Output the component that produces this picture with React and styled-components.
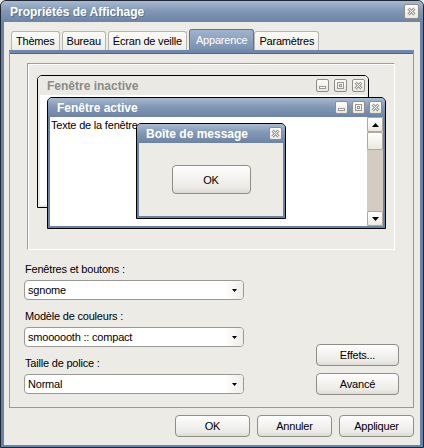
import styled, { createGlobalStyle } from 'styled-components';

const GlobalStyle = createGlobalStyle`
    body {
        margin: 0;
        background: #ecebe6;
        font-family: 'Liberation Sans', Arial, sans-serif;
        font-size: 11px;
        letter-spacing: -0.2px;
    }
`;

const Window = styled.div`
    width: 424px;
    height: 448px;
    box-sizing: border-box;
    border: 1px solid #1d2633;
    border-radius: 6px 6px 0 0;
    background: #6a82a3;
    display: flex;
    flex-direction: column;
    overflow: hidden;
`;

const TitleBar = styled.div`
    height: 21px;
    flex: none;
    display: flex;
    align-items: center;
    justify-content: space-between;
    padding: 0 4px 0 9px;
    background: linear-gradient(#a9bad0 0%, #8298b6 45%, #6c84a5 100%);
`;

const TitleText = styled.span`
    color: #fff;
    font-weight: bold;
    font-size: 12px;
    letter-spacing: 0;
    text-shadow: 1px 1px 0 rgba(40, 55, 80, 0.35);
`;

const Body = styled.div`
    flex: 1;
    margin: 0 3px 2px;
    background: #ecebe6;
    padding: 7px 6px 8px 5px;
    display: flex;
    flex-direction: column;
`;

const TabRow = styled.div`
    height: 21px;
    display: flex;
    align-items: flex-end;
    padding-left: 2px;
`;

const Tab = styled.div`
    height: ${(p) => (p.$selected ? 21 : 19)}px;
    box-sizing: border-box;
    padding: 0 ${(p) => (p.$selected ? 6 : 4)}px;
    margin-right: ${(p) => (p.$selected ? 0 : 2)}px;
    display: flex;
    align-items: center;
    border: 1px solid ${(p) => (p.$selected ? '#5d7494' : '#b7b5ae')};
    border-bottom: none;
    border-radius: 3px 3px 0 0;
    background: ${(p) =>
        p.$selected
            ? 'linear-gradient(#9fb3cc, #7890b0)'
            : 'linear-gradient(#fbfbf9, #eeede8)'};
    color: ${(p) => (p.$selected ? '#fff' : '#000')};
    white-space: nowrap;
`;

const Panel = styled.div`
    height: 358px;
    box-sizing: border-box;
    border: 1px solid #919b9c;
    border-top: 3px solid #6f88a9;
    box-shadow: inset 0 1px 0 #4f6586;
    padding: 10px 14px 0 14px;
    display: flex;
    flex-direction: column;
`;

const Preview = styled.div`
    position: relative;
    width: 368px;
    height: 187px;
    box-sizing: border-box;
    margin-left: 3px;
    border: 1px solid;
    border-color: #9d9c97 #fff #fff #9d9c97;
    box-shadow: inset 1px 1px 0 #fff;
    background: #ecebe6;
`;

const MiniWindow = styled.div`
    position: absolute;
    left: ${(p) => p.$x}px;
    top: ${(p) => p.$y}px;
    width: ${(p) => p.$w}px;
    height: ${(p) => p.$h}px;
    box-sizing: border-box;
    border: 1px solid #000;
    border-radius: 5px 5px 0 0;
    background: ${(p) => (p.$active ? '#6a82a3' : '#ebe9e3')};
    padding: 0 2px 2px;
    display: flex;
    flex-direction: column;
    overflow: hidden;
`;

const MiniTitle = styled.div`
    height: 19px;
    flex: none;
    display: flex;
    align-items: center;
    justify-content: space-between;
    padding: 0 3px 0 9px;
    margin: 0 -2px;
    background: ${(p) =>
        p.$active ? 'linear-gradient(#a9bad0 0%, #8298b6 45%, #6c84a5 100%)' : '#ebe9e3'};
    color: ${(p) => (p.$active ? '#fff' : '#8c8b87')};
    font-weight: bold;
    font-size: 12px;
    letter-spacing: 0;
`;

const CaptionGroup = styled.div`
    display: flex;
    gap: ${(p) => p.$gap}px;
`;

const CaptionBtn = styled.div`
    width: ${(p) => p.$size}px;
    height: ${(p) => p.$size}px;
    box-sizing: border-box;
    border: 1px solid #8f8e89;
    border-radius: 2px;
    background: linear-gradient(#fdfdfb, #e9e7e0);
    display: flex;
    align-items: center;
    justify-content: center;
`;

const Client = styled.div`
    flex: 1;
    background: #fff;
    display: flex;
`;

const ClientText = styled.div`
    flex: 1;
    padding: 2px 1px;
    color: #000;
`;

const ScrollBar = styled.div`
    width: 16px;
    display: flex;
    flex-direction: column;
    background: #d4ccc1;
`;

const ScrollPart = styled.div`
    height: ${(p) => p.$h}px;
    box-sizing: border-box;
    border: 1px solid #b1a99c;
    border-radius: 2px;
    background: linear-gradient(#fff, #ebe8e1);
    display: flex;
    align-items: center;
    justify-content: center;
`;

const Track = styled.div`
    flex: 1;
`;

const MsgBody = styled.div`
    flex: 1;
    background: #ecebe6;
    display: flex;
    align-items: center;
    justify-content: center;
`;

const Button = styled.div`
    width: ${(p) => p.$w}px;
    height: ${(p) => p.$h || 22}px;
    box-sizing: border-box;
    border: 1px solid #8e8d88;
    border-radius: 4px;
    background: linear-gradient(#fefefe, #ebeae5 80%, #dcdad3);
    display: flex;
    align-items: center;
    justify-content: center;
    color: #000;
`;

const Lower = styled.div`
    display: flex;
    justify-content: space-between;
    align-items: flex-end;
    margin-top: 13px;
`;

const Column = styled.div`
    width: 220px;
    display: flex;
    flex-direction: column;
`;

const Label = styled.div`
    line-height: 13px;
    margin: ${(p) => (p.$first ? 0 : 10)}px 0 4px 1px;
`;

const Select = styled.div`
    height: 20px;
    box-sizing: border-box;
    border: 1px solid #9a9995;
    border-radius: 4px;
    background: #fff;
    display: flex;
    align-items: center;
    overflow: hidden;
`;

const SelectValue = styled.div`
    flex: 1;
    padding-left: 3px;
`;

const SelectArrow = styled.div`
    width: 18px;
    align-self: stretch;
    background: linear-gradient(to right, #fff, #eeede9);
    display: flex;
    align-items: center;
    justify-content: center;
`;

const SideButtons = styled.div`
    display: flex;
    flex-direction: column;
    gap: 7px;
    margin-bottom: -1px;
`;

const Footer = styled.div`
    margin-top: 7px;
    display: flex;
    justify-content: flex-end;
    gap: 7px;
`;

const Glyph = ({ kind }) => {
    if (kind === 'min')
        return (
            <svg width="9" height="9" viewBox="0 0 9 9">
                <rect x="1.5" y="5.5" width="6" height="2" fill="#fff" stroke="#9a9994" />
            </svg>
        );
    if (kind === 'max')
        return (
            <svg width="9" height="9" viewBox="0 0 9 9">
                <rect x="1.5" y="1.5" width="6" height="6" fill="none" stroke="#9a9994" />
                <rect x="3.5" y="3.5" width="2" height="2" fill="none" stroke="#9a9994" />
            </svg>
        );
    return (
        <svg width="9" height="9" viewBox="0 0 9 9">
            <path d="M1.5 1.5 L7.5 7.5 M7.5 1.5 L1.5 7.5" stroke="#9a9994" strokeWidth="3" />
            <path d="M1.5 1.5 L7.5 7.5 M7.5 1.5 L1.5 7.5" stroke="#fff" strokeWidth="1" />
        </svg>
    );
};

const Caption = ({ kinds, size = 13, gap = 4 }) => (
    <CaptionGroup $gap={gap}>
        {kinds.map((k) => (
            <CaptionBtn key={k} $size={size}>
                <Glyph kind={k} />
            </CaptionBtn>
        ))}
    </CaptionGroup>
);

const Triangle = ({ up, w = 7, h = 4 }) => (
    <svg width={w} height={h} viewBox={`0 0 ${w} ${h}`}>
        <polygon points={up ? `0,${h} ${w},${h} ${w / 2},0` : `0,0 ${w},0 ${w / 2},${h}`} fill="#000" />
    </svg>
);

const tabs = ['Thèmes', 'Bureau', 'Écran de veille', 'Apparence', 'Paramètres'];

const fields = [
    { label: 'Fenêtres et boutons :', value: 'sgnome' },
    { label: 'Modèle de couleurs :', value: 'smoooooth :: compact' },
    { label: 'Taille de police :', value: 'Normal' },
];

const App = () => {
    return (
        <>
            <GlobalStyle />
            <Window>
                <TitleBar>
                    <TitleText>Propriétés de Affichage</TitleText>
                    <Caption kinds={['close']} size={15} />
                </TitleBar>
                <Body>
                    <TabRow>
                        {tabs.map((t) => (
                            <Tab key={t} $selected={t === 'Apparence'}>
                                {t}
                            </Tab>
                        ))}
                    </TabRow>
                    <Panel>
                        <Preview>
                            <MiniWindow $x={9} $y={11} $w={332} $h={133}>
                                <MiniTitle>
                                    Fenêtre inactive
                                    <Caption kinds={['min', 'max', 'close']} gap={5} />
                                </MiniTitle>
                                <Client />
                            </MiniWindow>
                            <MiniWindow $active $x={19} $y={33} $w={339} $h={132}>
                                <MiniTitle $active>
                                    Fenêtre active
                                    <Caption kinds={['min', 'max', 'close']} gap={4} />
                                </MiniTitle>
                                <Client>
                                    <ClientText>Texte de la fenêtre</ClientText>
                                    <ScrollBar>
                                        <ScrollPart $h={15}>
                                            <Triangle up />
                                        </ScrollPart>
                                        <ScrollPart $h={18} />
                                        <Track />
                                        <ScrollPart $h={15}>
                                            <Triangle />
                                        </ScrollPart>
                                    </ScrollBar>
                                </Client>
                            </MiniWindow>
                            <MiniWindow $active $x={108} $y={59} $w={150} $h={96}>
                                <MiniTitle $active>
                                    Boîte de message
                                    <Caption kinds={['close']} />
                                </MiniTitle>
                                <MsgBody>
                                    <Button $w={79} $h={29}>OK</Button>
                                </MsgBody>
                            </MiniWindow>
                        </Preview>
                        <Lower>
                            <Column>
                                {fields.map((f, i) => (
                                    <div key={f.label}>
                                        <Label $first={i === 0}>{f.label}</Label>
                                        <Select>
                                            <SelectValue>{f.value}</SelectValue>
                                            <SelectArrow>
                                                <Triangle w={5} h={3} />
                                            </SelectArrow>
                                        </Select>
                                    </div>
                                ))}
                            </Column>
                            <SideButtons>
                                <Button $w={83}>Effets...</Button>
                                <Button $w={83}>Avancé</Button>
                            </SideButtons>
                        </Lower>
                    </Panel>
                    <Footer>
                        <Button $w={75}>OK</Button>
                        <Button $w={75}>Annuler</Button>
                        <Button $w={75}>Appliquer</Button>
                    </Footer>
                </Body>
            </Window>
        </>
    );
};

export default App;
